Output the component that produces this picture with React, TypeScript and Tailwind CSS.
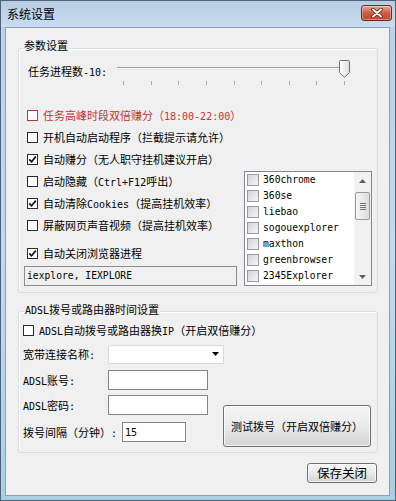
import React from "react";

function T({ s, className = "" }: { s: string; className?: string }) {
  const parts = s.split(/([\x20-\x7e]+)/).filter((p) => p.length > 0);
  return (
    <span className={"whitespace-pre " + className}>
      {parts.map((p, i) =>
        /^[\x20-\x7e]+$/.test(p) ? (
          <span key={i} className="font-['DejaVu_Sans_Mono',monospace] text-[10px]">
            {p}
          </span>
        ) : (
          <span key={i}>{p}</span>
        )
      )}
    </span>
  );
}

function Box({ checked, red }: { checked?: boolean; red?: boolean }) {
  return (
    <span
      className={
        red
          ? "flex h-[11px] w-[11px] shrink-0 items-center justify-center border border-[#c83232] bg-white"
          : "flex h-[11px] w-[11px] shrink-0 items-center justify-center border border-[#2b2b2b] bg-white"
      }
    >
      {checked && (
        <svg width="9" height="9" viewBox="0 0 9 9">
          <path d="M1.2 4.3 L3.6 6.8 L7.8 1.6" fill="none" stroke="#111" strokeWidth="1.7" />
        </svg>
      )}
    </span>
  );
}

function ListBox() {
  const items = ["360chrome", "360se", "liebao", "sogouexplorer", "maxthon", "greenbrowser", "2345Explorer"];
  return (
    <div className="ml-[7px] flex h-[115px] w-[128px] self-end border border-[#828790] bg-white">
      <div className="flex flex-1 flex-col">
        {items.map((it) => (
          <div key={it} className="flex h-[16px] items-center gap-[4px] pl-[2px]">
            <span className="h-[12px] w-[12px] shrink-0 border border-[#9b9b9b] bg-gradient-to-br from-[#d2d4d8] to-[#f6f6f6]" />
            <span className="font-['DejaVu_Sans_Mono',monospace] text-[9.7px] leading-none">{it}</span>
          </div>
        ))}
      </div>
      <div className="flex w-[17px] flex-col bg-[#f1f1f1]">
        <div className="flex h-[17px] items-center justify-center">
          <svg width="7" height="4" viewBox="0 0 7 4">
            <path d="M0 4 L3.5 0 L7 4 Z" fill="#606060" />
          </svg>
        </div>
        <div className="flex-1 px-[1px]">
          <div className="mt-[3px] flex h-[28px] flex-col items-center justify-center gap-[1px] rounded-[2px] border border-[#9a9a9a] bg-gradient-to-r from-[#f7f7f7] to-[#dcdcdc]">
            <span className="h-[1px] w-[6px] bg-[#777]" />
            <span className="h-[1px] w-[6px] bg-[#777]" />
            <span className="h-[1px] w-[6px] bg-[#777]" />
            <span className="h-[1px] w-[6px] bg-[#777]" />
          </div>
        </div>
        <div className="flex h-[17px] items-center justify-center">
          <svg width="7" height="4" viewBox="0 0 7 4">
            <path d="M0 0 L3.5 4 L7 0 Z" fill="#606060" />
          </svg>
        </div>
      </div>
    </div>
  );
}

function Slider() {
  const ticks = [0, 1, 2, 3, 4, 5, 6, 7, 8];
  return (
    <div className="relative h-[26px] w-[232px]">
      <div className="absolute left-0 right-[2px] top-[7px] h-[3px] border-b border-t border-b-[#e2e2e2] border-t-[#a2a2a2] bg-[#fbfbfb]" />
      <div className="absolute left-[6px] top-[21px] flex w-[222px] justify-between">
        {ticks.map((t) => (
          <span key={t} className="h-[4px] w-[1px] bg-[#a9a9a9]" />
        ))}
      </div>
      <svg className="absolute left-[222px] top-0" width="11" height="18" viewBox="0 0 11 18">
        <defs>
          <linearGradient id="thumbg" x1="0" y1="0" x2="1" y2="0">
            <stop offset="0" stopColor="#ffffff" />
            <stop offset="1" stopColor="#dcdcdc" />
          </linearGradient>
        </defs>
        <path
          d="M1.5 0.5 H9.5 A1 1 0 0 1 10.5 1.5 V12.5 L5.5 17.3 L0.5 12.5 V1.5 A1 1 0 0 1 1.5 0.5 Z"
          fill="url(#thumbg)"
          stroke="#6f6f6f"
        />
      </svg>
    </div>
  );
}

export default function App() {
  const rows: { t: string; checked?: boolean; red?: boolean }[] = [
    { t: "任务高峰时段双倍赚分（18:00-22:00）", red: true },
    { t: "开机自动启动程序（拦截提示请允许）" },
    { t: "自动赚分（无人职守挂机建议开启）", checked: true },
    { t: "启动隐藏（Ctrl+F12呼出）" },
    { t: "自动清除Cookies（提高挂机效率）", checked: true },
    { t: "屏蔽网页声音视频（提高挂机效率）" },
  ];

  return (
    <div className="flex h-[501px] w-[396px] flex-col overflow-hidden border border-[#4f6279] bg-gradient-to-b from-[#bccfe6] via-[#c6d9ef] to-[#a9cfe0] font-['Noto_Sans_CJK_SC',sans-serif] text-[11px] text-black">
      {/* Title bar */}
      <div className="flex h-[26px] items-start justify-between bg-gradient-to-b from-[#b7cbe2] to-[#c9dcf1]">
        <div className="flex h-[26px] items-center pl-[6px] text-[12px]">系统设置</div>
        <div className="mr-[3px] mt-[4px] flex h-[16px] w-[31px] items-center justify-center rounded-[3px] border border-[#6b2a22] bg-gradient-to-b from-[#e9a99a] via-[#cf5a3e] to-[#c24a2c] shadow-[inset_0_0_0_1px_rgba(255,255,255,0.35)]">
          <svg width="12" height="10" viewBox="0 0 12 10">
            <path d="M2 1.5 L10 8.5 M10 1.5 L2 8.5" stroke="#5a1c14" strokeWidth="3.6" strokeLinecap="round" />
            <path d="M2 1.5 L10 8.5 M10 1.5 L2 8.5" stroke="#ffffff" strokeWidth="2" strokeLinecap="round" />
          </svg>
        </div>
      </div>

      {/* Client */}
      <div className="mb-[4px] ml-[4px] mr-[5px] flex flex-1 flex-col border border-[#8b9eb5] bg-[#f0f0f0] pt-[20px]">
        {/* Group 1 */}
        <div className="relative ml-[12px] h-[245px] w-[360px] rounded-[3px] border border-[#d5dfe5] shadow-[inset_1px_1px_0_#ffffff]">
          <span className="absolute -top-[13px] left-[4px] flex h-[18px] items-center bg-[#f0f0f0] px-[1px] text-[11px]">
            参数设置
          </span>
          <div className="mt-[11px] flex h-[26px]">
            <div className="flex h-[22px] w-[98px] items-center pl-[9px]">
              <T s="任务进程数-10:" />
            </div>
            <Slider />
          </div>
          <div className="mt-[18px] flex pl-[5px]">
            <div className="flex w-[213px] flex-col">
              {rows.map((r) => (
                <div key={r.t} className="flex h-[22px] items-center gap-[5px] pl-[3px]">
                  <Box checked={r.checked} red={r.red} />
                  <T s={r.t} className={r.red ? "text-[#c83232]" : ""} />
                </div>
              ))}
              <div className="mt-[6px] flex h-[22px] items-center gap-[5px] pl-[3px]">
                <Box checked />
                <T s="自动关闭浏览器进程" />
              </div>
              <div className="mt-[2px] flex h-[20px] w-[213px] items-center border border-[#8e8e8e] bg-[#f0f0f0] pl-[2px]">
                <span className="font-['DejaVu_Sans_Mono',monospace] text-[9.7px]">iexplore, IEXPLORE</span>
              </div>
            </div>
            <ListBox />
          </div>
        </div>

        {/* Group 2 */}
        <div className="relative ml-[12px] mt-[18px] h-[142px] w-[360px] rounded-[3px] border border-[#d5dfe5] shadow-[inset_1px_1px_0_#ffffff]">
          <span className="absolute -top-[12px] left-[5px] flex h-[18px] items-center bg-[#f0f0f0] px-[1px]">
            <T s="ADSL拨号或路由器时间设置" />
          </span>
          <div className="mt-[8px] flex h-[20px] items-center gap-[5px] pl-[4px]">
            <Box />
            <T s="ADSL自动拨号或路由器换IP（开启双倍赚分）" />
          </div>
          <div className="mt-[4px] flex h-[20px] items-center">
            <div className="w-[89px] pl-[4px]">
              <T s="宽带连接名称:" />
            </div>
            <div className="flex h-[19px] w-[116px] items-center justify-end border border-[#dadada] bg-white pr-[4px]">
              <svg width="7" height="4" viewBox="0 0 7 4">
                <path d="M0 0 L7 0 L3.5 4 Z" fill="#000" />
              </svg>
            </div>
          </div>
          <div className="mt-[6px] flex">
            <div className="flex w-[204px] flex-col">
              <div className="flex h-[20px] items-center">
                <div className="w-[89px] pl-[4px]">
                  <T s="ADSL账号:" />
                </div>
                <div className="h-[20px] w-[100px] border border-[#848484] bg-white" />
              </div>
              <div className="mt-[5px] flex h-[20px] items-center">
                <div className="w-[89px] pl-[4px]">
                  <T s="ADSL密码:" />
                </div>
                <div className="h-[20px] w-[100px] border border-[#848484] bg-white" />
              </div>
              <div className="mt-[7px] flex h-[20px] items-center">
                <div className="w-[103px] pl-[4px]">
                  <T s="拨号间隔（分钟）:" />
                </div>
                <div className="flex h-[20px] w-[64px] items-center border border-[#848484] bg-white pl-[2px]">
                  <span className="font-['DejaVu_Sans_Mono',monospace] text-[10px]">15</span>
                </div>
              </div>
            </div>
            <div className="mt-[35px] flex h-[42px] w-[148px] items-center justify-center rounded-[3px] border border-[#707070] bg-gradient-to-b from-[#f6f6f6] via-[#ebebeb] to-[#d3d3d3] shadow-[inset_0_0_0_1px_rgba(255,255,255,0.7)]">
              测试拨号（开启双倍赚分）
            </div>
          </div>
        </div>

        {/* Save button */}
        <div className="mr-[12px] mt-[10px] flex h-[20px] w-[70px] items-center justify-center self-end rounded-[3px] border border-[#707070] bg-gradient-to-b from-[#f6f6f6] via-[#ebebeb] to-[#d3d3d3] text-[12.5px] shadow-[inset_0_0_0_1px_rgba(255,255,255,0.7)]">
          保存关闭
        </div>
      </div>
    </div>
  );
}
